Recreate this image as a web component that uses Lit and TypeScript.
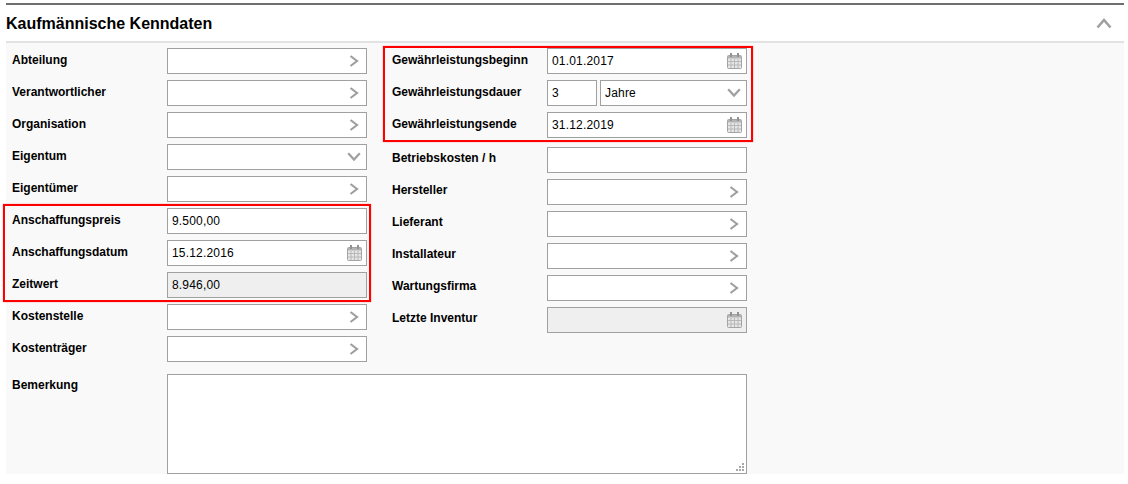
import { LitElement, html, css, svg } from "lit";
import { customElement } from "lit/decorators.js";

type Kind = "link" | "select" | "date" | "plain" | "dur";
interface Row { label: string; kind: Kind; value?: string; disabled?: boolean; }

const chevRight = html`<svg class="ico" width="10" height="12" viewBox="0 0 10 12"><path d="M1.5 1 L8 6 L1.5 11" fill="none" stroke="#a0a0a0" stroke-width="2.2"/></svg>`;
const chevDown = html`<svg class="ico down" width="14" height="10" viewBox="0 0 14 10"><path d="M1.2 1.2 L7 7.6 L12.8 1.2" fill="none" stroke="#a0a0a0" stroke-width="2.2"/></svg>`;
const calendar = html`<svg class="ico cal" width="15" height="16" viewBox="0 0 15 16">
  <rect x="0.5" y="2.5" width="14" height="13" rx="1" fill="#e6e6e6" stroke="#a4a4a4"/>
  <rect x="1" y="3" width="13" height="2.5" fill="#b4b4b4"/>
  <rect x="3" y="0" width="2" height="4" fill="#929292"/>
  <rect x="10" y="0" width="2" height="4" fill="#929292"/>
  ${svg`<path d="M4 6v9M7.5 6v9M11 6v9M1 8.5h13M1 12h13" stroke="#b8b8b8" stroke-width="1" fill="none"/>`}
</svg>`;

const left: Row[] = [
  { label: "Abteilung", kind: "link" },
  { label: "Verantwortlicher", kind: "link" },
  { label: "Organisation", kind: "link" },
  { label: "Eigentum", kind: "select" },
  { label: "Eigentümer", kind: "link" },
];
const leftMarked: Row[] = [
  { label: "Anschaffungspreis", kind: "plain", value: "9.500,00" },
  { label: "Anschaffungsdatum", kind: "date", value: "15.12.2016" },
  { label: "Zeitwert", kind: "plain", value: "8.946,00", disabled: true },
];
const leftEnd: Row[] = [
  { label: "Kostenstelle", kind: "link" },
  { label: "Kostenträger", kind: "link" },
];
const rightMarked: Row[] = [
  { label: "Gewährleistungsbeginn", kind: "date", value: "01.01.2017" },
  { label: "Gewährleistungsdauer", kind: "dur", value: "3" },
  { label: "Gewährleistungsende", kind: "date", value: "31.12.2019" },
];
const rightEnd: Row[] = [
  { label: "Betriebskosten / h", kind: "plain" },
  { label: "Hersteller", kind: "link" },
  { label: "Lieferant", kind: "link" },
  { label: "Installateur", kind: "link" },
  { label: "Wartungsfirma", kind: "link" },
  { label: "Letzte Inventur", kind: "date", disabled: true },
];

@customElement("app-root")
export class AppRoot extends LitElement {
  static styles = css`
    :host {
      display: block;
      font-family: "Liberation Sans", Arial, sans-serif;
      font-size: 12px;
      color: #000;
      background: #fff;
      height: 484px;
      padding: 3px 4px 0 6px;
      box-sizing: border-box;
    }
    .head {
      display: flex;
      align-items: center;
      justify-content: space-between;
      height: 40px;
      border-top: 2px solid #6e6e6e;
      border-bottom: 2px solid #e2e2e2;
      box-sizing: border-box;
    }
    h2 {
      margin: 1px 0 0 0;
      font-size: 16px;
      font-weight: bold;
      line-height: 20px;
    }
    .toggle { margin-right: 12px; display: block; }
    .body {
      background: #f9f9f9;
      height: 431px;
      padding-top: 5px;
      box-sizing: border-box;
    }
    .cols { display: flex; }
    .col { display: flex; flex-direction: column; gap: 6px; }
    .col.l { width: 361px; margin-right: 25px; }
    .col.r { width: 355px; }
    .group { display: flex; flex-direction: column; gap: 6px; position: relative; }
    .mark::after {
      content: "";
      position: absolute;
      border: 2px solid #f00;
      box-shadow: 0 0 1px rgba(255, 0, 0, 0.6);
      pointer-events: none;
    }
    .l .mark::after { top: -4px; bottom: -4px; left: -3px; right: -4px; }
    .r .mark { margin-bottom: 3px; }
    .r .mark::after { top: -2px; bottom: -4px; left: -9px; right: -6px; }
    .l .row { padding-left: 6px; }
    .row { display: flex; height: 26px; }
    .lbl {
      width: 155px;
      flex: none;
      font-weight: bold;
      line-height: 14px;
      padding-top: 5px;
      box-sizing: border-box;
    }
    .plainrow .lbl { padding-top: 4px; }
    .field {
      flex: 1;
      min-width: 0;
      display: flex;
      align-items: center;
      background: #fff;
      border: 1px solid #a0a0a0;
      box-sizing: border-box;
      height: 26px;
      padding-right: 7px;
    }
    .field.off { background: #efefef; }
    .field input {
      flex: 1;
      min-width: 0;
      border: 0;
      outline: 0;
      background: transparent;
      padding: 0 0 0 4px;
      font: 12px "Liberation Sans", Arial, sans-serif;
      letter-spacing: 0.18px;
      color: #000;
      height: 20px;
    }
    .ico { display: block; flex: none; }
    .ico.cal { margin-right: -3px; }
    .ico.down { margin-right: -2px; }
    .dur { display: flex; gap: 3px; flex: 1; min-width: 0; }
    .dur .n { flex: 0 0 50px; padding-right: 0; }
    .note {
      display: flex;
      margin-top: 12px;
      padding-left: 6px;
    }
    .note .box {
      position: relative;
      width: 580px;
      height: 100px;
      background: #fff;
      border: 1px solid #a0a0a0;
      box-sizing: border-box;
      display: flex;
    }
    .note textarea {
      flex: 1;
      border: 0;
      outline: 0;
      background: transparent;
      resize: none;
      padding: 4px;
      font: 12px "Liberation Sans", Arial, sans-serif;
    }
    .grip { position: absolute; right: 2px; bottom: 2px; display: block; }
    .note .lbl { padding-top: 4px; }
  `;

  private field(r: Row) {
    if (r.kind === "dur") {
      return html`<div class="dur">
        <div class="field n"><input .value=${r.value ?? ""} /></div>
        <div class="field"><input .value=${"Jahre"} />${chevDown}</div>
      </div>`;
    }
    const icon =
      r.kind === "link" ? chevRight :
      r.kind === "select" ? chevDown :
      r.kind === "date" ? calendar : null;
    return html`<div class="field ${r.disabled ? "off" : ""}">
      <input .value=${r.value ?? ""} ?disabled=${r.disabled} />${icon}
    </div>`;
  }

  private row(r: Row, extra = "") {
    return html`<div class="row ${extra}"><div class="lbl">${r.label}</div>${this.field(r)}</div>`;
  }

  render() {
    return html`
      <div class="head">
        <h2>Kaufmännische Kenndaten</h2>
        <svg class="toggle" width="16" height="11" viewBox="0 0 16 11"><path d="M1.5 9.5 L8 2 L14.5 9.5" fill="none" stroke="#a0a0a0" stroke-width="2.6"/></svg>
      </div>
      <div class="body">
        <div class="cols">
          <div class="col l">
            ${left.map((r) => this.row(r))}
            <div class="group mark">${leftMarked.map((r) => this.row(r))}</div>
            ${leftEnd.map((r) => this.row(r))}
          </div>
          <div class="col r">
            <div class="group mark">${rightMarked.map((r) => this.row(r))}</div>
            ${rightEnd.map((r) => this.row(r, "plainrow"))}
          </div>
        </div>
        <div class="note">
          <div class="lbl">Bemerkung</div>
          <div class="box">
            <textarea></textarea>
            <svg class="grip" width="8" height="8" viewBox="0 0 8 8" fill="#a8a8a8">
              <rect x="6" y="0" width="2" height="2"/>
              <rect x="3" y="3" width="2" height="2"/><rect x="6" y="3" width="2" height="2"/>
              <rect x="0" y="6" width="2" height="2"/><rect x="3" y="6" width="2" height="2"/><rect x="6" y="6" width="2" height="2"/>
            </svg>
          </div>
        </div>
      </div>
    `;
  }
}
